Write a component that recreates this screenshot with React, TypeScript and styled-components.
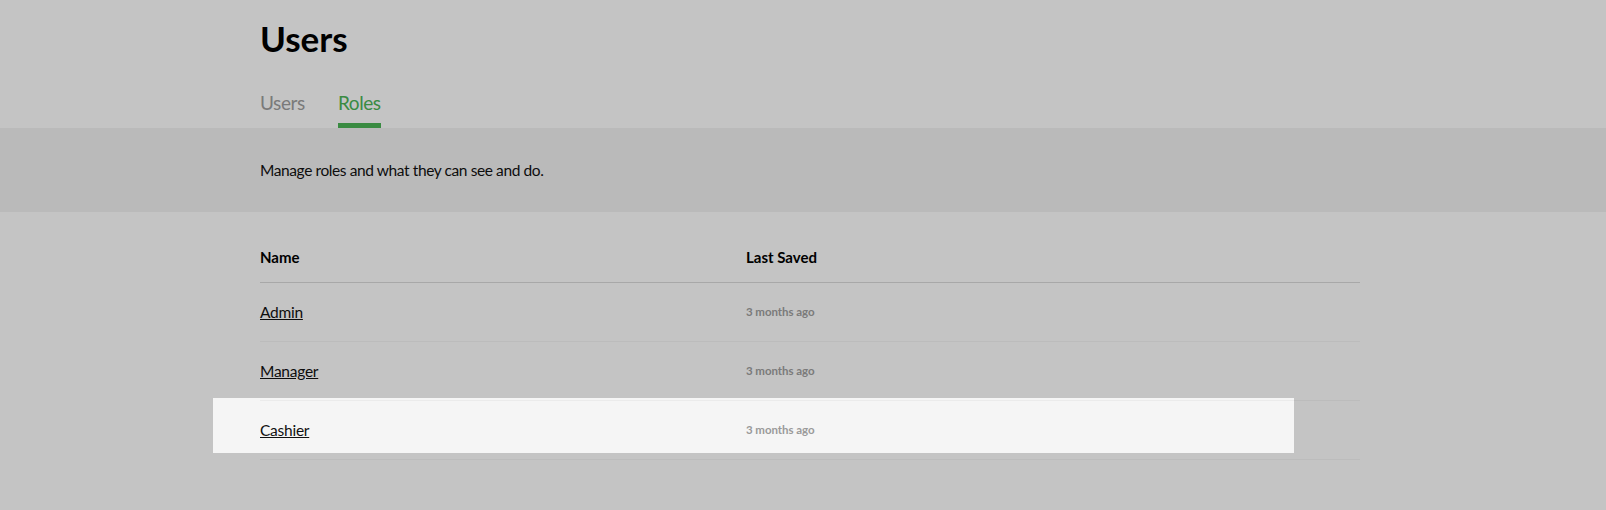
import React from "react";
import styled, { createGlobalStyle } from "styled-components";

const GlobalStyle = createGlobalStyle`
  html, body {
    margin: 0;
    padding: 0;
    background: #f5f5f5;
    font-family: Lato, "Open Sans", Arial, sans-serif;
    color: #111;
    overflow: hidden;
  }
  * { box-sizing: border-box; }
`;

const Page = styled.div`
  position: relative;
  width: 1606px;
  height: 510px;
  background: #f5f5f5;
`;

const Header = styled.header`
  padding: 18px 0 0 260px;
`;

const Title = styled.h1`
  margin: 0;
  font-size: 35px;
  line-height: 40px;
  font-weight: 700;
  color: #000;
`;

const Tabs = styled.nav`
  display: flex;
  gap: 33px;
  margin-top: 33px;
`;

const Tab = styled.a<{ $active?: boolean }>`
  display: block;
  font-size: 19px;
  line-height: 24px;
  letter-spacing: -0.4px;
  padding-bottom: 8px;
  border-bottom: 5px solid ${(p) => (p.$active ? "#49ae53" : "transparent")};
  color: ${(p) => (p.$active ? "#49ae53" : "#999999")};
  text-decoration: none;
  cursor: pointer;
`;

const Band = styled.section`
  background: #e9e9e9;
  padding: 32px 0 32px 260px;
`;

const Description = styled.p`
  margin: 0;
  font-size: 15.5px;
  line-height: 20px;
  letter-spacing: -0.4px;
  color: #111;
`;

const Table = styled.div`
  width: 1100px;
  margin-left: 260px;
`;

const HeadRow = styled.div`
  display: grid;
  grid-template-columns: 486px 1fr;
  padding: 35px 0 15px;
  border-bottom: 1px solid #d3d3d3;
`;

const HeadCell = styled.div`
  font-size: 15px;
  line-height: 20px;
  font-weight: 700;
  color: #000;
`;

const Row = styled.div`
  display: grid;
  grid-template-columns: 486px 1fr;
  align-items: center;
  height: 59px;
  border-bottom: 1px solid #ebebeb;
`;

const NameLink = styled.a`
  font-size: 15.5px;
  line-height: 20px;
  letter-spacing: -0.25px;
  color: #111;
  text-decoration: underline;
  text-underline-offset: 1px;
  cursor: pointer;
`;

const Saved = styled.span`
  display: block;
  margin-bottom: 1px;
  font-size: 11.5px;
  line-height: 16px;
  font-weight: 700;
  letter-spacing: -0.05px;
  color: #9a9a9a;
`;

const Spotlight = styled.div`
  position: absolute;
  left: 213px;
  top: 398px;
  width: 1081px;
  height: 55px;
  box-shadow: 0 0 0 4000px rgba(0, 0, 0, 0.2);
  pointer-events: none;
`;

const roles = [
  { name: "Admin", saved: "3 months ago" },
  { name: "Manager", saved: "3 months ago" },
  { name: "Cashier", saved: "3 months ago" },
];

export default function App() {
  return (
    <Page>
      <GlobalStyle />
      <Header>
        <Title>Users</Title>
        <Tabs>
          <Tab>Users</Tab>
          <Tab $active>Roles</Tab>
        </Tabs>
      </Header>
      <Band>
        <Description>Manage roles and what they can see and do.</Description>
      </Band>
      <Table>
        <HeadRow>
          <HeadCell>Name</HeadCell>
          <HeadCell>Last Saved</HeadCell>
        </HeadRow>
        {roles.map((r) => (
          <Row key={r.name}>
            <div>
              <NameLink>{r.name}</NameLink>
            </div>
            <div>
              <Saved>{r.saved}</Saved>
            </div>
          </Row>
        ))}
      </Table>
      <Spotlight />
    </Page>
  );
}
